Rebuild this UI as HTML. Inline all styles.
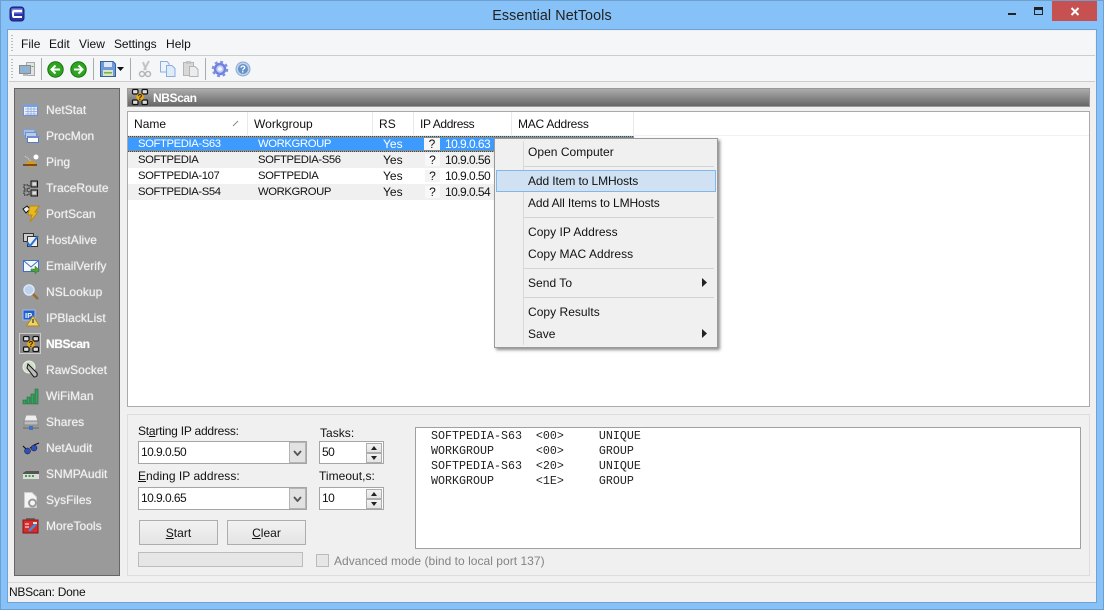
<!DOCTYPE html>
<html><head><meta charset="utf-8"><style>
html,body{margin:0;padding:0;background:#86c1f7}
#w{position:relative;width:1104px;height:610px;overflow:hidden;background:#86c1f7;font:12px "Liberation Sans",sans-serif;color:#111;letter-spacing:.03px}
#w div,#w svg{position:absolute}
.t{white-space:pre;line-height:14px;height:14px}
.s{color:#f2f2f2;left:46px;text-shadow:0 0 1px #ddd}
.m{left:528px}
.sep{height:1px;background:#d4d4d4}
.h{top:117px}
.u{font-size:11.3px;letter-spacing:-.4px}
.n{letter-spacing:-.55px}
.b{background:linear-gradient(#f2f2f2,#e4e4e4);border:1px solid #adadad;box-sizing:border-box}
.dd{background:#e2e2e2;border:1px solid #b4b4b4;box-sizing:border-box}
.in{background:#fff;border:1px solid #a5a5a5;box-sizing:border-box}
u{text-decoration:underline}
.mono{font:11.67px "Liberation Mono",monospace;letter-spacing:0;color:#222;left:431px}
.dot{height:1px;background:repeating-linear-gradient(90deg,#6a4208 0 1px,#f09a20 1px 2px)}
</style></head><body><div id="w">
<div style="left:0;top:0;width:1104px;height:610px;box-sizing:border-box;border:1px solid #6f9fcf"></div>
<svg style="left:9px;top:6px" width="17" height="17" viewBox="0 0 17 17"><rect x="1" y="1" width="14" height="14" rx="3" fill="#2a34a8" stroke="#1a2070"/><rect x="2.5" y="2.5" width="11" height="5" fill="#7d8bea"/><path d="M13 5H5Q4 5 4 7V9Q4 11 5 11H13" fill="none" stroke="#fff" stroke-width="2"/></svg>
<div class="t" style="left:0;top:8px;width:1104px;text-align:center;font-size:14.3px;line-height:16px;height:16px;letter-spacing:.1px;color:#222">Essential NetTools</div>
<div style="left:1008px;top:13px;width:8px;height:2px;background:#222"></div>
<div style="left:1034px;top:7px;width:7px;height:4px;border:1.5px solid #222;border-top-width:3px"></div>
<div style="left:1052px;top:1px;width:45px;height:20px;background:#c75050"></div>
<svg style="left:1070px;top:7px" width="10" height="9" viewBox="0 0 10 9"><path d="M1.5 1L8.5 8M8.5 1L1.5 8" stroke="#fff" stroke-width="2"/></svg>
<div style="left:8px;top:30px;width:1088px;height:572px;background:#f0f0f0;outline:1px solid #6fa3d6"></div>
<div style="left:9px;top:31px;width:1086px;height:24px;background:#f5f6f7;border-bottom:1px solid #ccc"></div>
<div style="left:9px;top:56px;width:1086px;height:25px;background:#f5f6f7;border-bottom:1px solid #ccc"></div>
<div style="left:11px;top:35px;width:2px;height:17px;background:repeating-linear-gradient(#bbb 0 1px,transparent 1px 3px)"></div>
<div style="left:11px;top:59px;width:2px;height:19px;background:repeating-linear-gradient(#bbb 0 1px,transparent 1px 3px)"></div>
<div class="t" style="left:21px;top:37px">File</div><div class="t" style="left:49px;top:37px">Edit</div><div class="t" style="left:79px;top:37px">View</div><div class="t" style="left:114px;top:37px;letter-spacing:-.1px">Settings</div><div class="t" style="left:166px;top:37px">Help</div>
<div style="left:41px;top:58px;width:1px;height:22px;background:#aaa"></div><div style="left:93px;top:58px;width:1px;height:22px;background:#aaa"></div><div style="left:130px;top:58px;width:1px;height:22px;background:#aaa"></div><div style="left:205px;top:58px;width:1px;height:22px;background:#aaa"></div>
<svg style="left:18px;top:60px" width="18" height="18" viewBox="0 0 18 18"><rect x="8.500" y="2.500" width="8" height="13" fill="#e2e2e2" stroke="#a8a8a8"/><rect x="1.500" y="5.500" width="11" height="8" fill="#8fb4d2" stroke="#8a8a8a"/><rect x="5" y="14" width="5" height="2" fill="#bbb"/><rect x="13.500" y="6" width="2" height="1" fill="#5cb04c"/></svg>
<svg style="left:47px;top:61px" width="17" height="17" viewBox="0 0 17 17"><circle cx="8.5" cy="8.5" r="7.7" fill="#2da51f" stroke="#17700f"/><path d="M13 8.5H5M8.5 4.5L4.5 8.5L8.5 12.5" fill="none" stroke="#fff" stroke-width="2"/></svg>
<svg style="left:70px;top:61px" width="17" height="17" viewBox="0 0 17 17"><circle cx="8.5" cy="8.5" r="7.7" fill="#2da51f" stroke="#17700f"/><path d="M4 8.5H12M8.5 4.5L12.5 8.5L8.500 12.5" fill="none" stroke="#fff" stroke-width="2"/></svg>
<svg style="left:100px;top:61px" width="16" height="16" viewBox="0 0 16 16"><path d="M.5.5H13L15.500 3V15.500H.5Z" fill="#6f99d8" stroke="#37619c"/><rect x="4" y="1" width="8" height="5" fill="#dce8f6"/><rect x="3" y="9" width="10" height="6" fill="#d5e7c4"/><rect x="4" y="11" width="8" height="1.500" fill="#79b04c"/></svg>
<svg style="left:117px;top:67px" width="7" height="4" viewBox="0 0 7 4"><path d="M0 0H7L3.500 4Z" fill="#111"/></svg>
<svg style="left:138px;top:60px" width="14" height="18" viewBox="0 0 14 18"><path d="M11 1L6 10M5 2L8 10" stroke="#c4c4c4" stroke-width="2" fill="none"/><circle cx="4" cy="14" r="2.500" fill="none" stroke="#b4b4b4" stroke-width="1.500"/><circle cx="10" cy="14" r="2.500" fill="none" stroke="#b4b4b4" stroke-width="1.500"/></svg>
<svg style="left:159px;top:60px" width="18" height="18" viewBox="0 0 18 18"><path d="M1.500 1.500H8L10 3.500V12H1.500Z" fill="#eef4fc" stroke="#8aaee0"/><path d="M7.500 5.500H13L16 8.500V16.500H7.500Z" fill="#dfeafa" stroke="#8aaee0"/></svg>
<svg style="left:182px;top:60px" width="18" height="18" viewBox="0 0 18 18"><rect x="1.500" y="2.500" width="10" height="13" fill="#d8d8d8" stroke="#b4b4b4"/><rect x="4" y="1" width="5" height="3" fill="#c4c4c4"/><path d="M7.500 6.500H13L16 9.500V16.500H7.500Z" fill="#ececec" stroke="#b4b4b4"/></svg>
<svg style="left:211px;top:60px" width="18" height="18" viewBox="0 0 18 18"><circle cx="9" cy="9" r="5" fill="#c5cdf2" stroke="#6f82de" stroke-width="2.500"/><circle cx="9" cy="9" r="2" fill="#f0f2fc"/><circle cx="9" cy="9" r="7" fill="none" stroke="#7f90e4" stroke-width="2.500" stroke-dasharray="2.800 2.700"/></svg>
<svg style="left:235px;top:61px" width="16" height="16" viewBox="0 0 16 16"><circle cx="8" cy="8" r="7" fill="#bcd2ec" stroke="#8fabd2"/><circle cx="8" cy="8" r="5" fill="#6492c8"/><text x="8" y="11.500" font-size="10" font-weight="bold" text-anchor="middle" fill="#fff" font-family="Liberation Sans">?</text></svg>

<div style="left:14px;top:88px;width:106px;height:488px;box-sizing:border-box;background:#9a9a9a;border:1px solid #666"></div>
<div class="t s" style="top:103px">NetStat</div><div class="t s" style="top:129px">ProcMon</div><div class="t s" style="top:155px">Ping</div><div class="t s" style="top:181px">TraceRoute</div><div class="t s" style="top:207px">PortScan</div><div class="t s" style="top:233px">HostAlive</div><div class="t s" style="top:259px">EmailVerify</div><div class="t s" style="top:285px">NSLookup</div><div class="t s" style="top:311px">IPBlackList</div><div class="t s" style="top:337px;font-weight:bold;color:#fff;letter-spacing:-.4px">NBScan</div><div class="t s" style="top:363px">RawSocket</div><div class="t s" style="top:389px">WiFiMan</div><div class="t s" style="top:415px">Shares</div><div class="t s" style="top:441px">NetAudit</div><div class="t s" style="top:467px">SNMPAudit</div><div class="t s" style="top:493px">SysFiles</div><div class="t s" style="top:519px">MoreTools</div>
<svg style="left:22px;top:101px" width="18" height="280" viewBox="0 0 18 280"><g><rect x="1.500" y="3.500" width="14" height="11" fill="#eef2fa" stroke="#6f8fd0"/><rect x="1" y="3" width="15" height="3" fill="#7e9ed8"/><path d="M3 8H15M3 10.500H15M3 13H15M6 6V14M9 6V14M12 6V14" stroke="#8aa8dc" stroke-width=".8"/></g>
<g transform="translate(0,26)"><rect x="1.500" y="2.500" width="11" height="6" fill="#a8c0e0" stroke="#7e9ed8"/><rect x="3.500" y="5.500" width="11" height="6" fill="#b8cdea" stroke="#6f8fd0"/><rect x="5.500" y="9.500" width="11" height="6" fill="#fff" stroke="#5a7cc0"/><rect x="5.500" y="9" width="11" height="2" fill="#6f8fd0"/></g>
<g transform="translate(0,52)"><circle cx="14" cy="4" r="2.500" fill="#fff"/><path d="M3 3L9 8" stroke="#ddd" stroke-dasharray="1 1"/><ellipse cx="9" cy="11" rx="5" ry="3" fill="#d99a1c"/><path d="M1 12H15" stroke="#5a3510" stroke-width="1.500"/></g>
<g transform="translate(0,78)" fill="none" stroke="#111"><rect x="9" y="2" width="6.500" height="6"/><rect x="9" y="11" width="6.500" height="6"/><rect x="2" y="6" width="5" height="4" stroke-dasharray="1.500 1"/><rect x="2" y="12" width="5" height="4" stroke-dasharray="1.500 1"/><rect x="10.500" y="3.500" width="3.500" height="3" fill="#ddd" stroke="none"/><rect x="10.500" y="12.500" width="3.500" height="3" fill="#ddd" stroke="none"/></g>
<g transform="translate(0,104)"><path d="M1 4L5 1L8 4L4 8Z" fill="#eee" stroke="#111"/><path d="M8 1H17L13 7H16L8 17L10 10H6Z" fill="#e8b820" stroke="#b88a10"/></g>
<g transform="translate(0,130)"><rect x="1.500" y="2.500" width="10" height="8" fill="#ccc" stroke="#333"/><rect x="5.500" y="5.500" width="10" height="10" fill="#eee" stroke="#333"/><path d="M5 11L8 15L16 5" fill="none" stroke="#2a72d0" stroke-width="2"/></g>
<g transform="translate(0,156)"><rect x="1.500" y="3.500" width="15" height="11" fill="#f4f7fc" stroke="#3d70c8"/><path d="M2 4L9 10L16 4" fill="none" stroke="#3d70c8"/><path d="M9 12H13V9L17.500 13L13 17V14.500H9Z" fill="#4ea13a" stroke="#2d7a22" stroke-width=".5"/></g>
<g transform="translate(0,182)"><circle cx="7" cy="7" r="5" fill="#bcd3ef" stroke="#dce8f6" stroke-width="1.500"/><path d="M11 11L16 16" stroke="#9a6a30" stroke-width="2.500"/></g>
<g transform="translate(0,208)"><rect x="1" y="1" width="12" height="10" fill="#1f5fd0" stroke="#9dbff0"/><text x="3" y="9" font-size="7.500" font-weight="bold" fill="#fff" font-family="Liberation Sans">IP</text><path d="M11 7L17.500 17H4.500Z" fill="#efd26a" stroke="#a98a20"/><path d="M11 10V14" stroke="#333" stroke-width="1.200"/></g>
<g transform="translate(0,260)"><circle cx="7" cy="6" r="6" fill="#cfe0c8" stroke="#eee"/><path d="M6 3L15 12Q16 16 12 16L5 7Z" fill="#bbb" stroke="#111"/></g>
</svg>
<div style="left:19px;top:333px;width:22px;height:21px;box-sizing:border-box;border:1px solid #ccc;background:#888"></div>
<svg style="left:22px;top:335px" width="18" height="18" viewBox="0 0 18 18"><g fill="#ddd" stroke="#111" stroke-width="1.200"><path d="M4 4L14 14M14 4L4 14" fill="none"/><rect x="1.500" y="1.500" width="5.500" height="4.500" rx="1"/><rect x="11" y="1.500" width="5.500" height="4.500" rx="1"/><rect x="1.500" y="12" width="5.500" height="4.500" rx="1"/><rect x="11" y="12" width="5.500" height="4.500" rx="1"/></g><circle cx="9" cy="9" r="3.800" fill="#e8a810"/><text x="9" y="12" font-size="8" font-weight="bold" text-anchor="middle" fill="#222" font-family="Liberation Sans">?</text></svg>
<svg style="left:22px;top:387px" width="18" height="150" viewBox="0 0 18 150"><g><path d="M1 17V13H4V17ZM5 17V10H8V17ZM9 17V7H12V17ZM13 17V2H16V17Z" fill="#38a060" stroke="#1d6a3a" stroke-width=".6"/></g>
<g transform="translate(0,26)"><path d="M4 2H14L16 8H2Z" fill="#eee" stroke="#999"/><rect x="2" y="8" width="14" height="4" fill="#bbb" stroke="#888"/><path d="M1 15H17" stroke="#777" stroke-width="1.500"/><rect x="7" y="13" width="4" height="4" fill="#3d70c8"/></g>
<g transform="translate(0,52)"><path d="M1 7L4 10M17 4L12 6M8 9L10 8" stroke="#111" fill="none" stroke-width="1.200"/><circle cx="5.500" cy="12" r="3" fill="#2d4fc0" stroke="#111" stroke-width=".5"/><circle cx="12" cy="9" r="3" fill="#2d4fc0" stroke="#111" stroke-width=".5"/></g>
<g transform="translate(0,78)"><path d="M1 8L4 6H17V14H1Z" fill="#555"/><rect x="1" y="9" width="16" height="5" fill="#ddd"/><path d="M3 11H5M6.500 11H8.500M10 11H12" stroke="#2fae3a" stroke-width="2"/></g>
<g transform="translate(0,104)"><path d="M2.500 1.500H10L14.500 6V16.500H2.500Z" fill="#f5f5f5" stroke="#ccc"/><circle cx="10.500" cy="12" r="3.500" fill="none" stroke="#999" stroke-width="2"/></g>
<g transform="translate(0,130)"><rect x="4" y="1" width="9" height="2" fill="#666"/><rect x="1" y="3" width="15" height="13" fill="#d62c2c" stroke="#8a1515"/><path d="M3 7H7M3 10H7" stroke="#fff"/><path d="M7 14L14 7" stroke="#3d8ee0" stroke-width="2.500"/><path d="M11 6H15" stroke="#ddd" stroke-width="2"/></g></svg>

<div style="left:127px;top:88px;width:963px;height:19px;box-sizing:border-box;border:1px solid #999;background:linear-gradient(#acacac,#666)"></div>
<svg style="left:131px;top:88px" width="18" height="18" viewBox="0 0 18 18"><g fill="#ddd" stroke="#111" stroke-width="1.200"><path d="M4 4L14 14M14 4L4 14" fill="none"/><rect x="1.500" y="1.500" width="5.500" height="4.500" rx="1"/><rect x="11" y="1.500" width="5.500" height="4.500" rx="1"/><rect x="1.500" y="12" width="5.500" height="4.500" rx="1"/><rect x="11" y="12" width="5.500" height="4.500" rx="1"/></g><circle cx="9" cy="9" r="3.800" fill="#e8a810"/><text x="9" y="12" font-size="8" font-weight="bold" text-anchor="middle" fill="#222" font-family="Liberation Sans">?</text></svg>
<div class="t" style="left:153px;top:91px;color:#fff;font-weight:bold;letter-spacing:-.4px">NBScan</div>

<div style="left:127px;top:111px;width:963px;height:296px;box-sizing:border-box;background:#fff;border:1px solid #aaa"></div>
<div style="left:128px;top:135px;width:961px;height:1px;background:#eef1f6"></div>
<div style="left:247px;top:112px;width:1px;height:23px;background:#e5e9f0"></div><div style="left:372px;top:112px;width:1px;height:23px;background:#e5e9f0"></div><div style="left:413px;top:112px;width:1px;height:23px;background:#e5e9f0"></div><div style="left:511px;top:112px;width:1px;height:23px;background:#e5e9f0"></div><div style="left:633px;top:112px;width:1px;height:23px;background:#e5e9f0"></div>
<div class="t h" style="left:134px">Name</div><div class="t h" style="left:254px">Workgroup</div><div class="t h" style="left:379px">RS</div><div class="t h" style="left:420px;letter-spacing:-.35px">IP Address</div><div class="t h" style="left:518px;letter-spacing:-.25px">MAC Address</div>
<svg style="left:232px;top:120px" width="7" height="7" viewBox="0 0 7 7"><path d="M1 6L6 1" stroke="#888"/></svg>
<div style="left:128px;top:136px;width:506px;height:16px;background:#3d9bff"></div>
<div class="dot" style="left:128px;top:136px;width:506px"></div><div class="dot" style="left:128px;top:151px;width:506px"></div>
<div style="left:128px;top:152px;width:506px;height:16px;background:#f0f0f0"></div>
<div style="left:128px;top:184px;width:506px;height:16px;background:#f0f0f0"></div>
<div class="t u" style="left:138px;top:137px;color:#fff">SOFTPEDIA-S63</div><div class="t u" style="left:258px;top:137px;color:#fff">WORKGROUP</div><div class="t" style="left:383px;top:137px;color:#fff">Yes</div><div class="t n" style="left:445px;top:137px;color:#fff">10.9.0.63</div>
<div class="t u" style="left:138px;top:153px">SOFTPEDIA</div><div class="t u" style="left:258px;top:153px">SOFTPEDIA-S56</div><div class="t" style="left:383px;top:153px">Yes</div><div class="t n" style="left:445px;top:153px">10.9.0.56</div>
<div class="t u" style="left:138px;top:169px">SOFTPEDIA-107</div><div class="t u" style="left:258px;top:169px">SOFTPEDIA</div><div class="t" style="left:383px;top:169px">Yes</div><div class="t n" style="left:445px;top:169px">10.9.0.50</div>
<div class="t u" style="left:138px;top:185px">SOFTPEDIA-S54</div><div class="t u" style="left:258px;top:185px">WORKGROUP</div><div class="t" style="left:383px;top:185px">Yes</div><div class="t n" style="left:445px;top:185px">10.9.0.54</div>
<div class="t" style="left:424px;top:138px;width:16px;height:12px;line-height:12px;background:#f6f6f6;text-align:center">?</div><div class="t" style="left:425px;top:154px;width:15px;height:12px;line-height:12px;background:#f8f8f8;text-align:center">?</div><div class="t" style="left:425px;top:170px;width:15px;height:12px;line-height:12px;background:#f4f4f4;text-align:center">?</div><div class="t" style="left:425px;top:186px;width:15px;height:12px;line-height:12px;background:#f8f8f8;text-align:center">?</div>

<div style="left:494px;top:138px;width:224px;height:210px;box-sizing:border-box;background:#f0f0f0;border:1px solid #9a9a9a;box-shadow:2px 2px 3px rgba(0,0,0,.45)"></div>
<div style="left:523px;top:141px;width:1px;height:204px;background:#d8d8d8"></div>
<div class="sep" style="left:524px;width:190px;top:166px"></div><div class="sep" style="left:524px;width:190px;top:217px"></div><div class="sep" style="left:524px;width:190px;top:268px"></div><div class="sep" style="left:524px;width:190px;top:297px"></div>
<div style="left:496px;top:170px;width:220px;height:22px;box-sizing:border-box;background:#cfe1f2;border:1px solid #83b7e6"></div>
<div class="t m" style="top:145px">Open Computer</div><div class="t m" style="top:174px;letter-spacing:-.1px">Add Item to LMHosts</div><div class="t m" style="top:196px;letter-spacing:-.1px">Add All Items to LMHosts</div><div class="t m" style="top:225px">Copy IP Address</div><div class="t m" style="top:247px">Copy MAC Address</div><div class="t m" style="top:276px">Send To</div><div class="t m" style="top:305px">Copy Results</div><div class="t m" style="top:327px">Save</div>
<svg style="left:702px;top:278px" width="5" height="9" viewBox="0 0 5 9"><path d="M0 0L5 4.500L0 9Z" fill="#222"/></svg>
<svg style="left:702px;top:329px" width="5" height="9" viewBox="0 0 5 9"><path d="M0 0L5 4.500L0 9Z" fill="#222"/></svg>

<div style="left:127px;top:414px;width:963px;height:162px;box-sizing:border-box;border:1px solid #ddd;background:#f0f0f0"></div>
<div class="t" style="left:138px;top:424px;letter-spacing:-.22px">St<u>a</u>rting IP address:</div>
<div class="in" style="left:138px;top:441px;width:169px;height:23px"></div><div class="t n" style="left:141px;top:445px">10.9.0.50</div>
<div class="dd" style="left:289px;top:442px;width:17px;height:21px"></div><svg style="left:293px;top:450px" width="9" height="6" viewBox="0 0 9 6"><path d="M1 1L4.500 5L8 1" fill="none" stroke="#555" stroke-width="1.800"/></svg>
<div class="t" style="left:138px;top:469px"><u>E</u>nding IP address:</div>
<div class="in" style="left:138px;top:487px;width:169px;height:23px"></div><div class="t n" style="left:141px;top:491px">10.9.0.65</div>
<div class="dd" style="left:289px;top:488px;width:17px;height:21px"></div><svg style="left:293px;top:496px" width="9" height="6" viewBox="0 0 9 6"><path d="M1 1L4.500 5L8 1" fill="none" stroke="#555" stroke-width="1.800"/></svg>
<div class="t" style="left:320px;top:426px">Tasks:</div>
<div class="in" style="left:319px;top:441px;width:65px;height:23px"></div><div class="t n" style="left:322px;top:445px">50</div>
<div class="b" style="left:366px;top:443px;width:16px;height:10px"></div><div class="b" style="left:366px;top:453px;width:16px;height:10px"></div>
<svg style="left:370px;top:445px" width="8" height="16" viewBox="0 0 8 16"><path d="M4 1L7 5H1ZM4 15L1 11H7Z" fill="#222"/></svg>
<div class="t" style="left:319px;top:469px">Timeout,s:</div>
<div class="in" style="left:319px;top:487px;width:65px;height:23px"></div><div class="t n" style="left:322px;top:491px">10</div>
<div class="b" style="left:366px;top:489px;width:16px;height:10px"></div><div class="b" style="left:366px;top:499px;width:16px;height:10px"></div>
<svg style="left:370px;top:491px" width="8" height="16" viewBox="0 0 8 16"><path d="M4 1L7 5H1ZM4 15L1 11H7Z" fill="#222"/></svg>
<div class="b" style="left:139px;top:520px;width:79px;height:25px"></div><div class="t" style="left:139px;top:526px;width:79px;text-align:center"><u>S</u>tart</div>
<div class="b" style="left:227px;top:520px;width:79px;height:25px"></div><div class="t" style="left:227px;top:526px;width:79px;text-align:center"><u>C</u>lear</div>
<div style="left:138px;top:552px;width:165px;height:15px;box-sizing:border-box;background:#e6e6e6;border:1px solid #bcbcbc"></div>
<div style="left:316px;top:554px;width:13px;height:13px;box-sizing:border-box;background:#e6e6e6;border:1px solid #bbb"></div>
<div class="t" style="left:334px;top:554px;color:#838383">Advanced mode (bind to local port 137)</div>
<div style="left:415px;top:427px;width:666px;height:122px;box-sizing:border-box;background:#fff;border:1px solid #a0a0a0"></div>
<div class="t mono" style="top:429px">SOFTPEDIA-S63  &lt;00&gt;     UNIQUE</div>
<div class="t mono" style="top:444px">WORKGROUP      &lt;00&gt;     GROUP</div>
<div class="t mono" style="top:459px">SOFTPEDIA-S63  &lt;20&gt;     UNIQUE</div>
<div class="t mono" style="top:474px">WORKGROUP      &lt;1E&gt;     GROUP</div>
<div style="left:8px;top:582px;width:1088px;height:1px;background:#d6d6d6"></div>
<div class="t" style="left:9px;top:585px;letter-spacing:-.25px">NBScan: Done</div>
</div></body></html>
